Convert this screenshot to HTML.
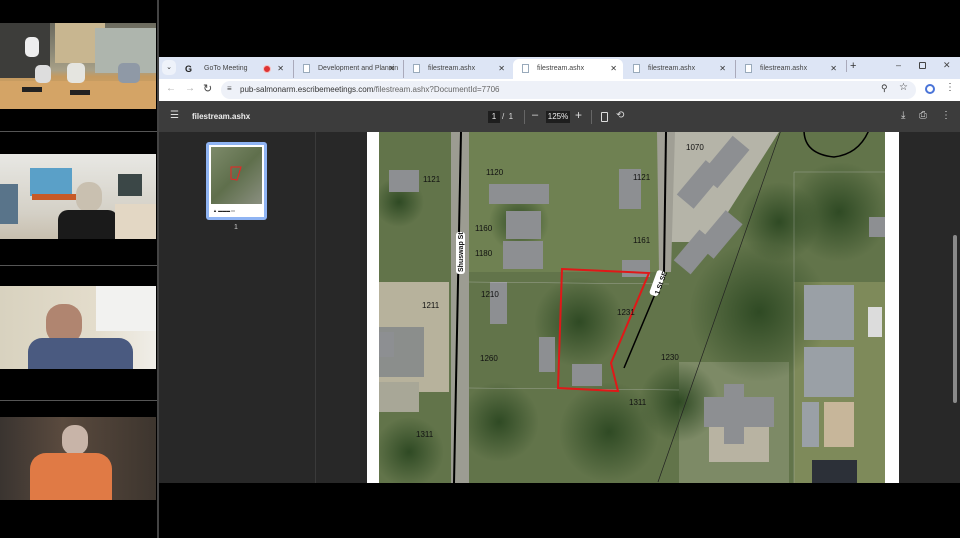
<!DOCTYPE html>
<html><head><meta charset="utf-8"><style>
*{margin:0;padding:0;box-sizing:border-box}
body{width:960px;height:538px;background:#000;position:relative;overflow:hidden;font-family:"Liberation Sans",sans-serif}
.abs{position:absolute}
.sep{position:absolute;left:0;width:157px;height:1px;background:#555}
.tab{position:absolute;top:60px;height:18px;font-size:7px;color:#444;line-height:18px;padding-left:24px}
.tab .fi{position:absolute;left:9px;top:4px;width:7px;height:9px;border:1px solid #9ab;background:#fff}
.tab .x{position:absolute;right:6px;top:0;font-size:8px;color:#333}
.ic{position:absolute;color:#ddd;font-size:10px}
.lbl{font-family:"Liberation Sans",sans-serif;font-size:8px;fill:#111}
</style></head><body>
<div class="abs" style="left:157px;top:0;width:2px;height:538px;background:#444"></div>
<div class="sep" style="top:131px"></div><div class="sep" style="top:265px"></div><div class="sep" style="top:400px"></div>
<div class="abs" style="left:0;top:23px;width:156px;height:86px;background:linear-gradient(180deg,#6b6a5e 0%,#8d8a78 35%,#a8a087 55%,#c49a60 62%,#d9a868 100%);overflow:hidden">
 <div class="abs" style="left:0;top:0;width:50px;height:55px;background:#3d3d3a"></div>
 <div class="abs" style="left:55px;top:0;width:50px;height:40px;background:#c8b690"></div>
 <div class="abs" style="left:95px;top:5px;width:61px;height:45px;background:#aeb5ad"></div>
 <div class="abs" style="left:0;top:58px;width:156px;height:30px;background:#d4a466"></div>
 <div class="abs" style="left:25px;top:14px;width:14px;height:20px;background:#eee;border-radius:5px"></div>
 <div class="abs" style="left:35px;top:42px;width:16px;height:18px;background:#ddd;border-radius:5px"></div>
 <div class="abs" style="left:67px;top:40px;width:18px;height:20px;background:#e5e5e0;border-radius:5px"></div>
 <div class="abs" style="left:118px;top:40px;width:22px;height:20px;background:#8f99a6;border-radius:5px"></div>
 <div class="abs" style="left:22px;top:64px;width:20px;height:5px;background:#222"></div>
 <div class="abs" style="left:70px;top:67px;width:20px;height:5px;background:#222"></div>
</div>
<div class="abs" style="left:0;top:154px;width:156px;height:85px;background:linear-gradient(180deg,#e8e8e4,#d4d0c6 70%,#c8bfae);overflow:hidden">
 <div class="abs" style="left:30px;top:14px;width:42px;height:28px;background:#5aa0c8"></div>
 <div class="abs" style="left:0;top:30px;width:18px;height:40px;background:#59748a"></div>
 <div class="abs" style="left:118px;top:20px;width:24px;height:22px;background:#3b4747"></div>
 <div class="abs" style="left:32px;top:40px;width:45px;height:6px;background:#c75a28"></div>
 <div class="abs" style="left:76px;top:28px;width:26px;height:30px;background:#c9c0b0;border-radius:12px"></div>
 <div class="abs" style="left:58px;top:56px;width:60px;height:30px;background:#1a1a1a;border-radius:10px 10px 0 0"></div>
 <div class="abs" style="left:115px;top:50px;width:41px;height:35px;background:#e3d7c4"></div>
</div>
<div class="abs" style="left:0;top:286px;width:156px;height:83px;background:linear-gradient(90deg,#d8d2bf,#e3dccb 60%,#f0eee8);overflow:hidden">
 <div class="abs" style="left:96px;top:0;width:60px;height:45px;background:#f2f2f0"></div>
 <div class="abs" style="left:46px;top:18px;width:36px;height:40px;background:#b08570;border-radius:16px"></div>
 <div class="abs" style="left:28px;top:52px;width:105px;height:31px;background:#4a5a80;border-radius:14px 14px 0 0"></div>
</div>
<div class="abs" style="left:0;top:417px;width:156px;height:83px;background:linear-gradient(90deg,#3a3430,#5a4a3e 40%,#3d352e);overflow:hidden">
 <div class="abs" style="left:62px;top:8px;width:26px;height:30px;background:#c8b4a8;border-radius:12px"></div>
 <div class="abs" style="left:30px;top:36px;width:82px;height:47px;background:#e07a45;border-radius:16px 16px 0 0"></div>
</div>

<div class="abs" style="left:159px;top:57px;width:801px;height:22px;background:#dde5f5"></div>
<div class="abs" style="left:162px;top:60px;width:14px;height:15px;background:#eef2fa;border-radius:5px;font-size:7px;text-align:center;line-height:15px;color:#333">&#8964;</div>
<div class="tab" style="left:180px;width:110px"><span class="abs" style="left:5px;top:0;font-weight:bold;font-size:9px;color:#222">G</span>GoTo Meeting<span class="abs" style="left:83px;top:5px;width:8px;height:8px;border-radius:50%;background:#d33;border:1.5px solid #f6bdbd"></span><span class="x">✕</span></div>
<div class="tab" style="left:293px;width:108px;border-left:1px solid #aab"><span class="fi"></span>Development and Plannin<span class="x">✕</span></div>
<div class="tab" style="left:403px;width:108px;border-left:1px solid #aab"><span class="fi"></span>filestream.ashx<span class="x">✕</span></div>
<div class="abs" style="left:513px;top:59px;width:110px;height:20px;background:#fff;border-radius:6px 6px 0 0"></div>
<div class="tab" style="left:513px;width:110px"><span class="fi"></span>filestream.ashx<span class="x">✕</span></div>
<div class="tab" style="left:624px;width:108px"><span class="fi"></span>filestream.ashx<span class="x">✕</span></div>
<div class="tab" style="left:735px;width:108px;border-left:1px solid #aab"><span class="fi"></span>filestream.ashx<span class="x">✕</span></div>
<div class="abs" style="left:846px;top:60px;font-size:11px;color:#333;border-left:1px solid #aab;padding-left:3px">+</div>
<div class="abs" style="left:896px;top:60px;font-size:9px;color:#444">&#8211;</div>
<div class="abs" style="left:919px;top:62px;width:7px;height:7px;border:1px solid #444;border-radius:1px"></div>
<div class="abs" style="left:943px;top:60px;font-size:9px;color:#444">✕</div>

<div class="abs" style="left:159px;top:79px;width:801px;height:22px;background:#fff"></div>
<div class="abs" style="left:166px;top:83px;font-size:10px;color:#aaa">&#8592;</div>
<div class="abs" style="left:185px;top:83px;font-size:10px;color:#aaa">&#8594;</div>
<div class="abs" style="left:203px;top:82px;font-size:11px;color:#444">&#8635;</div>
<div class="abs" style="left:221px;top:81px;width:695px;height:18px;background:#eef1f8;border-radius:9px"></div>
<div class="abs" style="left:227px;top:84px;font-size:8px;color:#444">&#8801;</div>
<div class="abs" style="left:240px;top:85px;font-size:8px;color:#333">pub-salmonarm.escribemeetings.com<span style="color:#666">/filestream.ashx?DocumentId=7706</span></div>
<div class="abs" style="left:881px;top:83px;font-size:9px;color:#333">&#9906;</div>
<div class="abs" style="left:899px;top:82px;font-size:10px;color:#333">☆</div>
<div class="abs" style="left:925px;top:84px;width:10px;height:10px;border-radius:50%;border:2px solid #4a74d8"></div>
<div class="abs" style="left:945px;top:82px;font-size:10px;color:#444">&#8942;</div>

<div class="abs" style="left:159px;top:101px;width:801px;height:31px;background:#3c3c3c"></div>
<div class="ic" style="left:170px;top:110px">&#9776;</div>
<div class="abs" style="left:192px;top:112px;font-size:8px;font-weight:bold;color:#eee">filestream.ashx</div>
<div class="abs" style="left:488px;top:111px;width:12px;height:12px;background:#1e1e1e;color:#eee;font-size:8px;text-align:center;line-height:12px">1</div>
<div class="abs" style="left:502px;top:112px;font-size:8px;color:#ddd">/&nbsp; 1</div>
<div class="abs" style="left:524px;top:110px;width:1px;height:14px;background:#666"></div>
<div class="abs" style="left:532px;top:109px;font-size:11px;color:#ddd">&#8211;</div>
<div class="abs" style="left:546px;top:111px;width:24px;height:12px;background:#1e1e1e;color:#eee;font-size:8px;text-align:center;line-height:12px">125%</div>
<div class="abs" style="left:575px;top:108px;font-size:12px;color:#ddd">+</div>
<div class="abs" style="left:591px;top:110px;width:1px;height:14px;background:#666"></div>
<div class="abs" style="left:601px;top:112px;width:7px;height:10px;border:1.5px solid #ddd;border-radius:1px"></div>
<div class="ic" style="left:616px;top:110px">&#10226;</div>
<div class="ic" style="left:901px;top:110px">&#10515;</div>
<div class="ic" style="left:919px;top:110px">&#9113;</div>
<div class="ic" style="left:941px;top:110px">&#8942;</div>

<div class="abs" style="left:159px;top:132px;width:801px;height:351px;background:#282828"></div>
<div class="abs" style="left:315px;top:132px;width:1px;height:351px;background:#3a3a3a"></div>
<div class="abs" style="left:206px;top:142px;width:61px;height:78px;background:#8fb4f3;border-radius:3px"></div>
<div class="abs" style="left:209px;top:145px;width:55px;height:72px;background:#fff"></div>
<div class="abs" style="left:211px;top:147px;width:51px;height:57px;background:linear-gradient(135deg,#7d8a6a,#5f6f4c 50%,#8a8f80)"></div>
<svg class="abs" style="left:211px;top:147px" width="51" height="57"><polygon points="20,20 30,20 26,33 20,32" fill="none" stroke="#e22" stroke-width="1"/></svg>
<div class="abs" style="left:213px;top:208px;font-size:4px;color:#222">▲ ▬▬▬ ▭</div>
<div class="abs" style="left:234px;top:224px;font-size:7px;color:#ccc">1</div>

<div class="abs" style="left:367px;top:132px;width:532px;height:351px;background:#fff"></div>
<svg class="abs" style="left:379px;top:132px" width="506" height="351" viewBox="0 0 506 351">
 <defs>
  <radialGradient id="t1" cx="50%" cy="50%" r="50%"><stop offset="0" stop-color="#2f4a24"/><stop offset="1" stop-color="#2f4a24" stop-opacity="0"/></radialGradient>
 </defs>
 <rect width="506" height="351" fill="#62744a"/>
 <rect x="0" y="150" width="70" height="110" fill="#b7b29c"/>
 <rect x="0" y="195" width="45" height="50" fill="#8b8e8c"/>
 <rect x="0" y="250" width="40" height="30" fill="#a8a797"/>
 <rect x="90" y="0" width="190" height="140" fill="#6f8152"/>
 <polygon points="292,0 400,0 330,110 292,110" fill="#b5b4a8"/>
 <rect x="300" y="230" width="110" height="121" fill="#7d8a66"/>
 <rect x="330" y="270" width="60" height="60" fill="#b8b3a2"/>
 <rect x="415" y="150" width="91" height="201" fill="#7e8a5a"/>
 <circle cx="20" cy="70" r="25" fill="url(#t1)"/><circle cx="140" cy="90" r="30" fill="url(#t1)"/>
 <circle cx="200" cy="190" r="45" fill="url(#t1)"/><circle cx="380" cy="180" r="70" fill="url(#t1)"/>
 <circle cx="230" cy="300" r="50" fill="url(#t1)"/><circle cx="120" cy="290" r="40" fill="url(#t1)"/>
 <circle cx="30" cy="320" r="35" fill="url(#t1)"/><circle cx="460" cy="80" r="50" fill="url(#t1)"/>
 <circle cx="300" cy="270" r="40" fill="url(#t1)"/><circle cx="400" cy="90" r="40" fill="url(#t1)"/>
 <rect x="72" y="0" width="18" height="351" fill="#9c9c92"/>
 <polygon points="278,0 296,0 292,140 280,140" fill="#a09f95"/>
 <g fill="#8d8f92">
  <rect x="110" y="52" width="60" height="20"/><rect x="127" y="79" width="35" height="28"/>
  <rect x="124" y="109" width="40" height="28"/><rect x="240" y="37" width="22" height="40"/>
  <rect x="243" y="128" width="28" height="17"/><rect x="111" y="150" width="17" height="42"/>
  <rect x="160" y="205" width="16" height="35"/><rect x="193" y="232" width="30" height="22"/>
  <rect x="10" y="38" width="30" height="22"/>
  <rect x="335" y="5" width="22" height="50" transform="rotate(40 346 30)"/>
  <rect x="310" y="30" width="22" height="45" transform="rotate(40 321 52)"/>
  <rect x="330" y="80" width="22" height="45" transform="rotate(40 341 102)"/>
  <rect x="305" y="100" width="22" height="40" transform="rotate(40 316 120)"/>
  <rect x="325" y="265" width="70" height="30"/><rect x="345" y="252" width="20" height="60"/>
  <rect x="490" y="85" width="16" height="20"/><rect x="0" y="200" width="15" height="25"/>
 </g>
 <g fill="#9aa0a6"><rect x="425" y="153" width="50" height="55"/><rect x="425" y="215" width="50" height="50"/><rect x="423" y="270" width="17" height="45"/></g>
 <rect x="445" y="270" width="30" height="45" fill="#c7b69a"/>
 <rect x="433" y="328" width="45" height="23" fill="#2c3038"/>
 <rect x="489" y="175" width="14" height="30" fill="#dcdcdc"/>
 <line x1="82" y1="0" x2="75" y2="351" stroke="#000" stroke-width="2"/>
 <line x1="287" y1="0" x2="285" y2="140" stroke="#000" stroke-width="2"/>
 <line x1="279" y1="155" x2="245" y2="236" stroke="#000" stroke-width="1.5"/>
 <line x1="402" y1="-2" x2="279" y2="350" stroke="#222" stroke-width="0.7"/>
 <path d="M425,-2 Q425,22 455,25 Q480,22 490,-2" fill="none" stroke="#000" stroke-width="1.5"/>
 <g stroke="#ccc" stroke-width="0.4" fill="none" opacity="0.7">
  <line x1="90" y1="150" x2="290" y2="152"/><line x1="90" y1="256" x2="300" y2="258"/>
  <line x1="415" y1="40" x2="506" y2="40"/><line x1="415" y1="40" x2="415" y2="351"/>
 </g>
 <polygon points="183,137 270,141 232,231 239,259 179,256" fill="none" stroke="#e01818" stroke-width="2"/>
 <g class="lbl">
  <text x="307" y="18">1070</text><text x="107" y="43">1120</text><text x="44" y="50">1121</text>
  <text x="254" y="48">1121</text><text x="96" y="99">1160</text><text x="254" y="111">1161</text>
  <text x="96" y="124">1180</text><text x="102" y="165">1210</text><text x="43" y="176">1211</text>
  <text x="238" y="183">1231</text><text x="101" y="229">1260</text><text x="282" y="228">1230</text>
  <text x="250" y="273">1311</text><text x="37" y="305">1311</text>
 </g>
 <rect x="77" y="100" width="9" height="42" rx="3" fill="#fff"/>
 <text x="0" y="0" transform="translate(84,140) rotate(-90)" class="lbl" style="font-size:7px;font-weight:bold">Shuswap St</text>
 <rect x="274" y="138" width="9" height="26" rx="3" fill="#fff" transform="rotate(20 278 151)"/>
 <text x="0" y="0" transform="translate(280,163) rotate(-70)" class="lbl" style="font-size:7px;font-weight:bold">1 St SE</text>
</svg>
<div class="abs" style="left:953px;top:235px;width:4px;height:168px;background:#8a8a8a;border-radius:2px"></div>
</body></html>
